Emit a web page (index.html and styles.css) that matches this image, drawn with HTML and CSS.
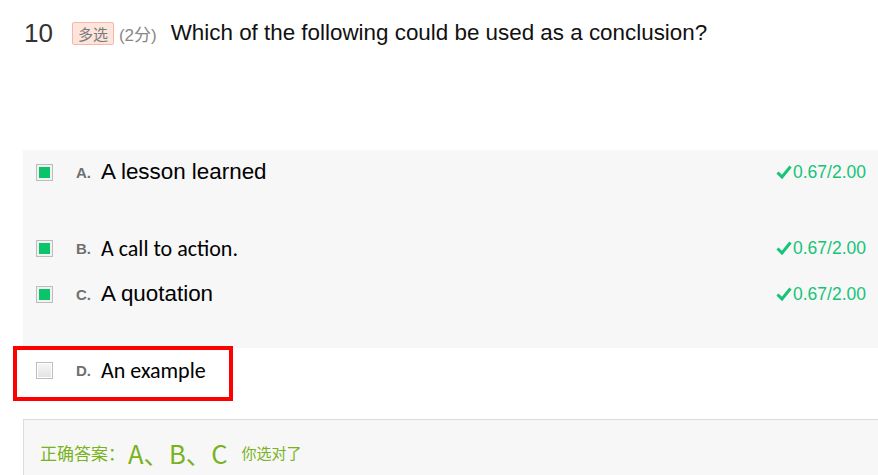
FILE: index.html
```html
<!DOCTYPE html>
<html lang="zh">
<head>
<meta charset="utf-8">
<link rel="stylesheet" href="styles.css">
</head>
<body>
<div class="question">
  <div class="q-head">
    <span class="q-num">10</span>
    <span class="q-tag">多选</span>
    <span class="q-score">(2分)</span>
    <span class="q-text">Which of the following could be used as a conclusion?</span>
  </div>

  <div class="opt-group">
    <div class="opt opt-tall">
      <span class="cb cb-on"></span>
      <span class="opt-letter">A.</span>
      <span class="opt-text arial">A lesson learned</span>
      <span class="opt-pts"><svg class="tick" viewBox="0 0 16 14" width="16" height="14"><path d="M1.5 7.5 L6 12 L14.5 1.5" fill="none" stroke="#15c477" stroke-width="3" stroke-linejoin="miter"/></svg>0.67/2.00</span>
    </div>
    <div class="opt opt-short">
      <span class="cb cb-on"></span>
      <span class="opt-letter">B.</span>
      <span class="opt-text calibri">A call to action.</span>
      <span class="opt-pts"><svg class="tick" viewBox="0 0 16 14" width="16" height="14"><path d="M1.5 7.5 L6 12 L14.5 1.5" fill="none" stroke="#15c477" stroke-width="3" stroke-linejoin="miter"/></svg>0.67/2.00</span>
    </div>
    <div class="opt opt-tall">
      <span class="cb cb-on"></span>
      <span class="opt-letter">C.</span>
      <span class="opt-text arial">A quotation</span>
      <span class="opt-pts"><svg class="tick" viewBox="0 0 16 14" width="16" height="14"><path d="M1.5 7.5 L6 12 L14.5 1.5" fill="none" stroke="#15c477" stroke-width="3" stroke-linejoin="miter"/></svg>0.67/2.00</span>
    </div>
  </div>

  <div class="opt opt-plain">
    <span class="cb"></span>
    <span class="opt-letter">D.</span>
    <span class="opt-text calibri">An example</span>
    <span class="mark"></span>
  </div>

  <div class="answer">
    <span class="ans-label">正确答案：</span>
    <span class="ans-val">A、B、C</span>
    <span class="ans-note">你选对了</span>
  </div>
</div>
</body>
</html>
```
FILE: styles.css
```css
html, body {
  margin: 0;
  padding: 0;
  background: #fff;
}
body {
  font-family: "Liberation Sans", Arial, "Noto Sans CJK SC", sans-serif;
  color: #000;
  width: 878px;
  overflow: hidden;
}
.q-head {
  display: flex;
  align-items: center;
  height: 66px;
  padding-left: 24px;
  padding-bottom: 84px;
}
.q-num {
  font-size: 26px;
  color: #333;
  margin-right: 19px;
  line-height: 30px;
}
.q-tag {
  font-family: "Noto Sans CJK SC", sans-serif;
  font-size: 15px;
  color: #7a7a7a;
  background: #fde4dc;
  border: 1px solid #f4b9a6;
  border-radius: 2px;
  width: 40px;
  height: 21px;
  line-height: 21px;
  text-align: center;
  margin-right: 5px;
}
.q-score {
  font-family: "Liberation Sans", "Noto Sans CJK SC", sans-serif;
  font-size: 17px;
  color: #888;
  margin-right: 14px;
}
.q-text {
  font-size: 22.4px;
  color: #111;
}
.opt-group {
  margin-left: 23px;
  background: #f7f7f7;
}
.opt {
  display: flex;
  align-items: center;
  height: 24px;
  padding-top: 10px;
  position: relative;
}
.opt-group .opt {
  padding-left: 13px;
}
.opt-tall { padding-bottom: 42px; }
.opt-short { padding-bottom: 12px; }
.opt-plain {
  margin-left: 23px;
  padding-left: 13px;
  padding-bottom: 37px;
}
.cb {
  box-sizing: border-box;
  width: 17px;
  height: 17px;
  border: 1px solid #bdbdbd;
  background: linear-gradient(#f7f7f7, #e2e2e2);
  box-shadow: inset 0 0 0 1px #fff;
  flex: none;
}
.cb-on {
  background: #0ac46a;
  box-shadow: inset 0 0 0 2px #f1f1f1;
}
.opt-letter {
  font-size: 15px;
  font-weight: bold;
  color: #707070;
  margin-left: 23px;
  width: 25px;
}
.opt-text {
  color: #000;
}
.arial { font-family: "Liberation Sans", Arial, sans-serif; font-size: 22.4px; }
.calibri { font-family: Carlito, Lato, sans-serif; font-size: 22px; }
.opt-pts {
  margin-left: auto;
  margin-right: 12px;
  display: flex;
  align-items: center;
  font-size: 17.5px;
  color: #15c477;
}
.tick {
  margin-right: 1px;
}
.mark {
  position: absolute;
  left: -10px;
  top: -2px;
  width: 212px;
  height: 47px;
  border: 4px solid #ff0000;
}
.answer {
  margin-left: 23px;
  border-top: 1px solid #dcdcdc;
  border-left: 1px solid #dcdcdc;
  background: #f7f7f7;
  height: 60px;
  display: flex;
  align-items: center;
  padding-left: 16px;
  padding-top: 2px;
  color: #78b21c;
  font-family: "Noto Sans CJK SC", sans-serif;
}
.ans-label {
  font-size: 17px;
  margin-right: 5px;
}
.ans-val {
  font-size: 25.5px;
  margin-right: 14px;
  margin-left: -2px;
}
.ans-note {
  font-size: 15px;
}
```
